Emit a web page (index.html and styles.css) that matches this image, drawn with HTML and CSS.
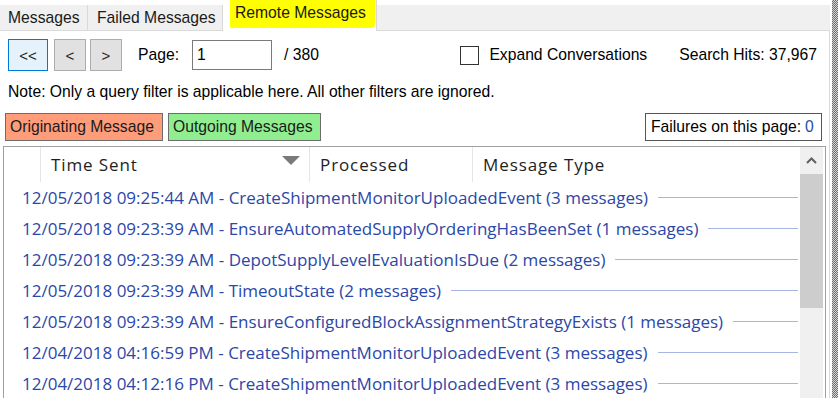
FILE: index.html
```html
<!DOCTYPE html>
<html>
<head>
<meta charset="utf-8" />
<title>Remote Messages</title>
<link rel="stylesheet" href="styles.css">
</head>
<body>
<div class="window">
  <div class="main">
    <div class="tabs">
      <div class="tab tab-messages">Messages</div>
      <div class="tab tab-failed">Failed Messages</div>
      <div class="tab tab-remote active"><span class="mark">Remote Messages</span></div>
    </div>
    <div class="panel">
      <div class="pager">
        <button class="btn btn-first">&lt;&lt;</button>
        <button class="btn btn-prev">&lt;</button>
        <button class="btn btn-next">&gt;</button>
        <span class="page-label">Page:</span>
        <input class="page-input" type="text" value="1" />
        <span class="page-total">/ 380</span>
        <div class="pager-right">
          <span class="checkbox"></span>
          <span class="expand-label">Expand Conversations</span>
          <span class="hits">Search Hits: 37,967</span>
        </div>
      </div>
      <div class="note">Note: Only a query filter is applicable here. All other filters are ignored.</div>
      <div class="legend">
        <span class="tag tag-origin">Originating Message</span>
        <span class="tag tag-out">Outgoing Messages</span>
        <span class="failures">Failures on this page: <span class="fail-count">0</span></span>
      </div>
      <div class="grid">
        <div class="list">
          <div class="head">
            <div class="col col-0"></div>
            <div class="col col-1">Time Sent
              <svg class="sort" width="18" height="9" viewBox="0 0 18 9"><path d="M0 0 H18 L9 9 Z" fill="#7a7a7a"/></svg>
            </div>
            <div class="col col-2">Processed</div>
            <div class="col col-3">Message Type</div>
          </div>
          <div class="row"><span class="conv">12/05/2018 09:25:44 AM - CreateShipmentMonitorUploadedEvent (3 messages)</span><span class="line"></span></div>
          <div class="row"><span class="conv">12/05/2018 09:23:39 AM - EnsureAutomatedSupplyOrderingHasBeenSet (1 messages)</span><span class="line"></span></div>
          <div class="row"><span class="conv">12/05/2018 09:23:39 AM - DepotSupplyLevelEvaluationIsDue (2 messages)</span><span class="line"></span></div>
          <div class="row"><span class="conv">12/05/2018 09:23:39 AM - TimeoutState (2 messages)</span><span class="line"></span></div>
          <div class="row"><span class="conv">12/05/2018 09:23:39 AM - EnsureConfiguredBlockAssignmentStrategyExists (1 messages)</span><span class="line"></span></div>
          <div class="row"><span class="conv">12/04/2018 04:16:59 PM - CreateShipmentMonitorUploadedEvent (3 messages)</span><span class="line"></span></div>
          <div class="row"><span class="conv">12/04/2018 04:12:16 PM - CreateShipmentMonitorUploadedEvent (3 messages)</span><span class="line"></span></div>
        </div>
        <div class="scroll">
          <div class="scroll-up">
            <svg width="11" height="7" viewBox="0 0 11 7"><path d="M1 6 L5.5 1.5 L10 6" fill="none" stroke="#606060" stroke-width="2"/></svg>
          </div>
          <div class="thumb"></div>
        </div>
      </div>
    </div>
  </div>
  <div class="splitter"></div>
</div>
</body>
</html>
```

FILE: styles.css
```css
body{margin:0; background:#fff; font-family:"Liberation Sans", Arial, sans-serif; font-size:15.7px; color:#000; overflow:hidden;}
.window{display:flex; height:398px;}
.main{width:830px; display:flex; flex-direction:column;}
.splitter{width:6px; margin-left:2px; background:repeating-conic-gradient(#707070 0 25%, #d4d4d4 0 50%) 0 0/2px 2px;}

.tabs{display:flex; align-items:flex-end; height:25px; margin-top:5px; background:#f0f0f0; border-bottom:1px solid #d9d9d9;}
.tab{height:25px; box-sizing:border-box; padding-left:8px; display:flex; align-items:center; border-right:1px solid #d9d9d9; color:#1a1a1a;}
.tab-messages{width:88px;}
.tab-failed{width:135px; padding-left:9px;}
.tab-remote{width:154px; height:31px; margin-bottom:-1px; padding-left:7px; background:#fff; border-right:1px solid #d9d9d9; align-items:flex-start;}
.mark{display:flex; align-items:center; height:31px; margin-top:-3px; padding:0 9px 0 5px; background:#ffff00; border-radius:3px 1px 4px 2px;}

.panel{flex:1; background:#fff; border-right:1px solid #d9d9d9; display:flex; flex-direction:column; min-height:0;}

.pager{display:flex; align-items:center; padding:8px 0 0 8px; height:32px;}
.btn{height:32px; box-sizing:border-box; border:1px solid #adadad; background:#e1e1e1; font-family:"Liberation Sans", Arial, sans-serif; font-size:15px; color:#222; padding:0;}
.btn-first{width:40px; margin-right:6px; border-color:#0078d7; background:#e5f1fb;}
.btn-prev{width:32px; margin-right:4px;}
.btn-next{width:32px;}
.page-label{width:54px; margin-left:16px;}
.page-input{width:80px; height:30px; box-sizing:border-box; border:1px solid #7a7a7a; font-family:"Liberation Sans", Arial, sans-serif; font-size:15.7px; padding:0 0 0 4px; outline:none;}
.page-total{margin-left:12px;}
.pager-right{margin-left:auto; display:flex; align-items:center; padding-right:12px;}
.checkbox{width:17px; height:17px; border:1px solid #333; margin-right:10px;}
.expand-label{margin-right:32px;}

.note{margin-top:11px; padding-left:8px; line-height:20px;}

.legend{display:flex; align-items:center; margin-top:11px; padding-left:5px; height:28px;}
.tag{height:28px; box-sizing:border-box; border:1px solid #6d6d6d; display:flex; align-items:center; padding-left:4px; color:#1a1a1a;}
.tag-origin{width:158px; margin-right:5px; background:#ff9c7a;}
.tag-out{width:153px; background:#90ee90;}
.failures{margin-left:auto; margin-right:7px; width:177px; height:28px; box-sizing:border-box; border:1px solid #555; display:flex; align-items:center; padding-left:5px; white-space:nowrap;}
.fail-count{color:#1f4fa8; margin-left:4px;}

.grid{flex:1; min-height:0; display:flex; margin:5px 3px 0 3px; border:1px solid #a0a0a0; border-bottom:none; font-family:"Open Sans", "Noto Sans", sans-serif; font-size:17px;}
.list{flex:1; min-width:0;}
.head{display:flex; height:35px;}
.col{box-sizing:border-box; display:flex; align-items:center; padding-left:10px; border-right:1px solid #e6e6e6; color:#1e1e1e; letter-spacing:0.9px;}
.col-0{width:37px;}
.col-1{width:269px; position:relative;}
.col-2{width:163px;}
.col-3{flex:1; border-right:none;}
.sort{position:absolute; right:9px; top:9px;}

.row{display:flex; align-items:center; height:31px; padding-left:18px;}
.conv{color:#2b47a8; white-space:nowrap;}
.line{flex:1; height:1px; background:#a8b6e3; margin:0 2px 0 10px;}

.scroll{width:23px; margin-right:2px; background:#f0f0f0;}
.scroll-up{height:27px; display:flex; align-items:center; justify-content:center;}
.thumb{height:134px; background:#cdcdcd;}
```
